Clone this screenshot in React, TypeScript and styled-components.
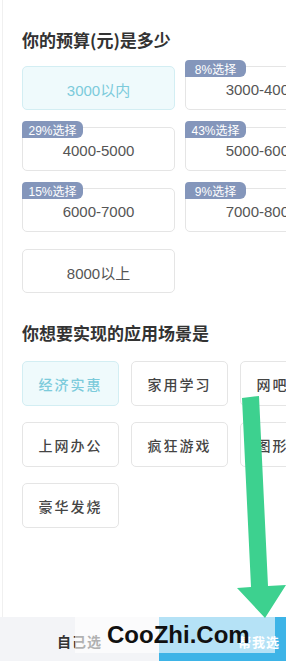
import React, { FC } from "react";
import styled, { createGlobalStyle } from "styled-components";

const GlobalStyle = createGlobalStyle`
  html, body {
    margin: 0;
    padding: 0;
    background: #fff;
  }
  body {
    font-family: "Liberation Sans", "Noto Sans CJK SC", sans-serif;
  }
`;

const Page = styled.div`
  position: relative;
  width: 286px;
  height: 661px;
  overflow: hidden;
  display: flex;
  flex-direction: column;
  background: #fff;
`;

const Content = styled.div`
  flex: 1;
  margin-left: 2px;
  border-left: 1px solid #f0f0f0;
  padding: 28px 0 0 19px;
`;

const SectionTitle = styled.h2<{ $top?: number }>`
  margin: ${(p) => p.$top ?? 0}px 0 0;
  height: 24px;
  line-height: 24px;
  font-family: "Noto Sans CJK SC", sans-serif;
  font-size: 17px;
  font-weight: 700;
  color: #333;
  white-space: nowrap;
`;

const BudgetGrid = styled.div`
  display: grid;
  grid-template-columns: 153px 153px;
  column-gap: 10px;
  row-gap: 17px;
  margin-top: 14px;
`;

const Card = styled.div<{ $active?: boolean }>`
  position: relative;
  box-sizing: border-box;
  height: 44px;
  display: flex;
  align-items: center;
  justify-content: center;
  border: 1px solid ${(p) => (p.$active ? "#d3eef3" : "#e5e5e5")};
  border-radius: 5px;
  background: ${(p) => (p.$active ? "#effafc" : "#fff")};
  color: ${(p) => (p.$active ? "#7ccbdb" : "#555")};
  font-family: "Liberation Sans", "Noto Sans CJK SC", sans-serif;
  font-size: 15px;
  padding-top: 2px;
  white-space: nowrap;
`;

const Badge = styled.span`
  position: absolute;
  top: -7px;
  left: -1px;
  height: 17px;
  width: 61px;
  display: flex;
  align-items: center;
  justify-content: center;
  background: #8496bb;
  color: #fff;
  font-size: 12px;
  border-radius: 4px 6px 6px 0;
`;

const SceneGrid = styled.div`
  display: grid;
  grid-template-columns: 97px 97px 97px;
  column-gap: 12px;
  row-gap: 16px;
  margin-top: 16px;
`;

const Scene = styled(Card)`
  height: 45px;
  padding-top: 0;
  font-family: "Noto Sans CJK SC", sans-serif;
  font-size: 14px;
  font-weight: 500;
  letter-spacing: 2px;
  color: ${(p) => (p.$active ? "#7ccbdb" : "#444")};
`;

const Footer = styled.div`
  display: flex;
  height: 44px;
  flex-shrink: 0;
`;

const SelfPick = styled.div`
  width: 159px;
  display: flex;
  align-items: center;
  justify-content: center;
  background: #f3f4f7;
  color: #333;
  font-family: "Noto Sans CJK SC", sans-serif;
  font-size: 14px;
  font-weight: 700;
  letter-spacing: 1px;
  padding-top: 4px;
`;

const HelpPick = styled.div`
  flex: 1;
  display: flex;
  align-items: center;
  padding: 4px 0 0 79px;
  background: #3db4e7;
  color: #fff;
  font-family: "Noto Sans CJK SC", sans-serif;
  font-size: 13px;
  font-weight: 700;
  letter-spacing: 1px;
  white-space: nowrap;
`;

const Watermark = styled.div`
  position: absolute;
  left: 75px;
  top: 617px;
  width: 200px;
  height: 36px;
  background: rgba(255, 255, 255, 0.62);
  display: flex;
  align-items: center;
  padding-left: 32px;
  box-sizing: border-box;
  font-family: "Liberation Sans", sans-serif;
  font-size: 24px;
  font-weight: 700;
  color: #111;
`;

const Arrow = styled.svg`
  position: absolute;
  left: 0;
  top: 0;
  pointer-events: none;
`;

const budgets = [
  { label: "3000以内", active: true },
  { label: "3000-4000", badge: "8%选择" },
  { label: "4000-5000", badge: "29%选择" },
  { label: "5000-6000", badge: "43%选择" },
  { label: "6000-7000", badge: "15%选择" },
  { label: "7000-8000", badge: "9%选择" },
  { label: "8000以上" },
];

const scenes = [
  { label: "经济实惠", active: true },
  { label: "家用学习" },
  { label: "网吧游戏" },
  { label: "上网办公" },
  { label: "疯狂游戏" },
  { label: "图形设计" },
  { label: "豪华发烧" },
];

const App: FC = () => {
  return (
    <Page>
      <GlobalStyle />
      <Content>
        <SectionTitle>你的预算(元)是多少</SectionTitle>
        <BudgetGrid>
          {budgets.map((item, index) => (
            <Card key={index} $active={item.active}>
              {item.badge && <Badge>{item.badge}</Badge>}
              {item.label}
            </Card>
          ))}
        </BudgetGrid>
        <SectionTitle $top={28}>你想要实现的应用场景是</SectionTitle>
        <SceneGrid>
          {scenes.map((item, index) => (
            <Scene key={index} $active={item.active}>
              {item.label}
            </Scene>
          ))}
        </SceneGrid>
      </Content>
      <Footer>
        <SelfPick>自己选</SelfPick>
        <HelpPick>帮我选</HelpPick>
      </Footer>
      <Watermark>CooZhi.Com</Watermark>
      <Arrow width="286" height="661" viewBox="0 0 286 661">
        <polygon
          points="242,398 259,396 268,586 286,585 265,618 237,588 251,587"
          fill="#3dd18f"
        />
      </Arrow>
    </Page>
  );
};

export default App;
